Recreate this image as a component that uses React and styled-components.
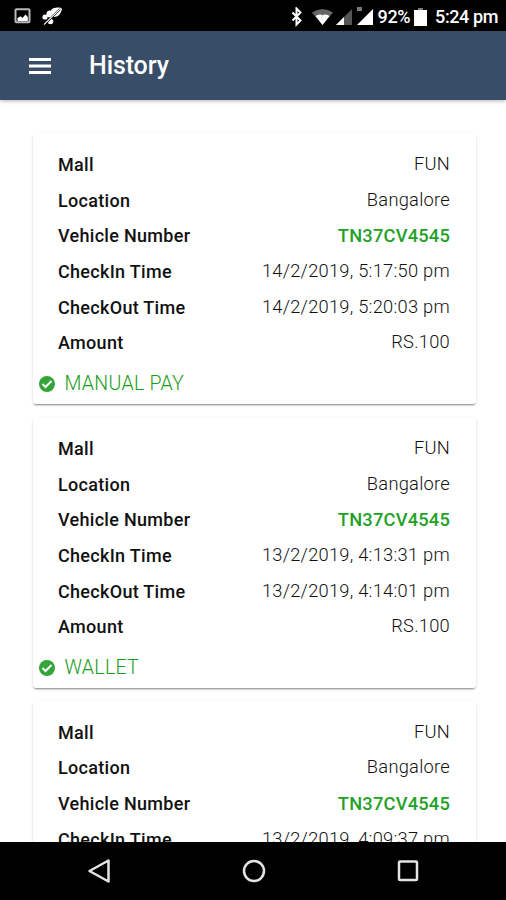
import React from 'react';
import styled, { createGlobalStyle } from 'styled-components';

const GlobalStyle = createGlobalStyle`
  * {
    box-sizing: border-box;
  }
  body {
    margin: 0;
    background: #fff;
    font-family: Roboto, sans-serif;
  }
`;

const Screen = styled.div`
  display: flex;
  flex-direction: column;
  height: 900px;
  width: 506px;
  overflow: hidden;
`;

const StatusBar = styled.div`
  display: flex;
  justify-content: space-between;
  align-items: center;
  flex: none;
  height: 31px;
  padding: 2px 8px 0 14px;
  background: #000;
  color: #fff;
  font-size: 18px;
  font-weight: 500;
`;

const StatusGroup = styled.div`
  display: flex;
  align-items: center;
`;

const Battery = styled.span`
  margin: 0 4px 0 4px;
  letter-spacing: -0.4px;
`;

const Clock = styled.span`
  margin-left: 8px;
  letter-spacing: -0.4px;
`;

const Toolbar = styled.header`
  display: flex;
  align-items: center;
  flex: none;
  height: 69px;
  padding-left: 29px;
  background: #384e68;
  color: #fff;
  box-shadow: 0 1px 4px rgba(0, 0, 0, 0.3);
  z-index: 1;
`;

const Title = styled.h1`
  margin: 0 0 0 38px;
  font-size: 25px;
  font-weight: 500;
  letter-spacing: -0.1px;
`;

const Content = styled.main`
  display: flex;
  flex-direction: column;
  gap: 13px;
  flex: 1;
  min-height: 0;
  padding: 33px 30px 0 33px;
  overflow: hidden;
`;

const Card = styled.section`
  flex: none;
  height: 270.9px;
  padding: 13px 26px 0 25px;
  border-radius: 3px;
  box-shadow: 0 2px 2px -1px rgba(0, 0, 0, 0.42), 0 1px 3px rgba(0, 0, 0, 0.12);
`;

const Row = styled.div`
  display: flex;
  justify-content: space-between;
  height: 35.7px;
  line-height: 38px;
`;

const Label = styled.span`
  font-size: 18px;
  font-weight: 500;
  letter-spacing: 0.3px;
  color: #111;
`;

const Value = styled.span`
  font-size: 18.3px;
  font-weight: ${({ $green }) => ($green ? 500 : 300)};
  letter-spacing: ${({ $green }) => ($green ? '0.2px' : '0.26px')};
  line-height: ${({ $green }) => ($green ? '38px' : '36px')};
  color: ${({ $green }) => ($green ? '#23a127' : '#111')};
`;

const Payment = styled.div`
  display: flex;
  align-items: center;
  gap: 10px;
  height: 44px;
  margin: 1.5px 0 0 -19.5px;
  font-size: 19.5px;
  font-weight: 300;
  letter-spacing: 0.3px;
  color: #189c20;
`;

const NavBar = styled.nav`
  display: flex;
  justify-content: space-between;
  align-items: center;
  flex: none;
  height: 58px;
  padding: 0 86px 0 87px;
  background: #000;
  z-index: 1;
`;

const NavIcon = styled.svg`
  width: 24px;
  height: 24px;
  fill: none;
  stroke: #e4e4e4;
  stroke-width: 2.5;
  stroke-linejoin: round;
`;

const history = [
  { checkIn: '14/2/2019, 5:17:50 pm', checkOut: '14/2/2019, 5:20:03 pm', payment: 'MANUAL PAY' },
  { checkIn: '13/2/2019, 4:13:31 pm', checkOut: '13/2/2019, 4:14:01 pm', payment: 'WALLET' },
  { checkIn: '13/2/2019, 4:09:37 pm' },
];

const NotificationIcons = () => (
  <svg width="50" height="20" viewBox="0 0 50 20">
    <rect x="1.5" y="2.3" width="14" height="13" rx="1" fill="none" stroke="#bbb" strokeWidth="2" />
    <path d="M3.5 14v-3l3-1.8 2 1.800 3-3.500 2.300 2.500v4z" fill="#fff" />
    <path d="M37 3c3-3 9-3 11-1-1 5-4 8-8 8z" fill="#fff" />
    <circle cx="31" cy="10" r="2.6" fill="#fff" />
    <circle cx="36" cy="7" r="3.6" fill="#fff" />
    <circle cx="36.5" cy="14.5" r="2.8" fill="#fff" />
    <path d="M31 17L46 2" stroke="#000" strokeWidth="2.2" />
    <path d="M30 17.500L47 1" stroke="#eee" strokeWidth="1.1" />
  </svg>
);

const SignalIcons = () => (
  <svg width="84" height="20" viewBox="0 0 84 20">
    <path d="M2.500 5.500l8 8-4 4V1.500l4 4-8 8" fill="none" stroke="#fff" strokeWidth="2" />
    <path d="M22 5.500Q32.500 -1.500 43 5.500L32.500 18z" fill="#666" />
    <path d="M25.500 9Q28 7 30.500 7.500Q32.500 9 34.500 7.500Q37 7 39.500 9L32.500 18z" fill="#fff" />
    <path d="M62 2v16H46z" fill="#555" />
    <path d="M54 10v8h-8z" fill="#fff" />
    <path d="M83 2v16H67z" fill="#fff" />
    <rect x="67" y="0" width="5" height="4" fill="#777" />
  </svg>
);

const Entry = ({ item }) => (
  <Card>
    <Row><Label>Mall</Label><Value>FUN</Value></Row>
    <Row><Label>Location</Label><Value>Bangalore</Value></Row>
    <Row><Label>Vehicle Number</Label><Value $green>TN37CV4545</Value></Row>
    <Row><Label>CheckIn Time</Label><Value>{item.checkIn}</Value></Row>
    {item.checkOut && (
      <>
        <Row><Label>CheckOut Time</Label><Value>{item.checkOut}</Value></Row>
        <Row><Label>Amount</Label><Value>RS.100</Value></Row>
        <Payment>
          <svg width="16" height="16" viewBox="0 0 16 16">
            <circle cx="8" cy="8" r="8" fill="#35a53a" />
            <path d="M3.500 8l3 3 6-6" fill="none" stroke="#fff" strokeWidth="2" />
          </svg>
          {item.payment}
        </Payment>
      </>
    )}
  </Card>
);

const App = () => (
  <Screen>
    <GlobalStyle />
    <StatusBar>
      <NotificationIcons />
      <StatusGroup>
        <SignalIcons />
        <Battery>92%</Battery>
        <svg width="13" height="18" viewBox="0 0 13 18">
          <path d="M4 0h5v2H4z" fill="#777" />
          <path d="M0 2h13v16H0z" fill="#fff" />
        </svg>
        <Clock>5:24 pm</Clock>
      </StatusGroup>
    </StatusBar>
    <Toolbar>
      <svg width="22" height="16" viewBox="0 0 22 16">
        <path d="M0 1.500h22M0 8h22M0 14.500h22" stroke="#fff" strokeWidth="2.800" />
      </svg>
      <Title>History</Title>
    </Toolbar>
    <Content>
      {history.map((item) => (
        <Entry key={item.checkIn} item={item} />
      ))}
    </Content>
    <NavBar>
      <NavIcon viewBox="0 0 24 24"><path d="M21.500 1.500v21L2.500 12z" /></NavIcon>
      <NavIcon viewBox="0 0 24 24"><circle cx="12" cy="12" r="10" /></NavIcon>
      <NavIcon viewBox="0 0 24 24"><rect x="3" y="2.500" width="18" height="18.500" rx="1" /></NavIcon>
    </NavBar>
  </Screen>
);

export default App;
